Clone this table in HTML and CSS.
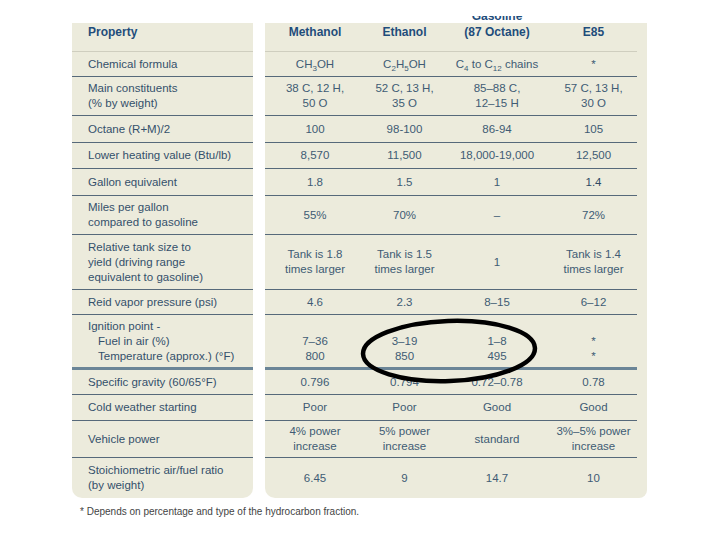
FILE: index.html
```html
<!DOCTYPE html>
<html>
<head>
<meta charset="utf-8">
<link rel="stylesheet" href="styles.css">
</head>
<body>
<div class="page">
  <div class="clip">
    <table class="fuel">
      <colgroup>
        <col class="c-prop"><col class="c-gap"><col class="c-m"><col class="c-e"><col class="c-g"><col class="c-e85"><col class="c-pad">
      </colgroup>
      <tr class="head">
        <th class="prop">Property</th><td class="gap"></td>
        <th>Methanol</th><th>Ethanol</th><th><span class="over">Gasoline</span>(87 Octane)</th><th>E85</th><td class="pad"></td>
      </tr>
      <tr class="h25">
        <td class="prop">Chemical formula</td><td class="gap"></td>
        <td>CH<sub>3</sub>OH</td><td>C<sub>2</sub>H<sub>5</sub>OH</td><td>C<sub>4</sub> to C<sub>12</sub> chains</td><td>*</td><td class="pad"></td>
      </tr>
      <tr class="h39">
        <td class="prop">Main constituents<br>(% by weight)</td><td class="gap"></td>
        <td>38 C, 12 H,<br>50 O</td><td>52 C, 13 H,<br>35 O</td><td>85–88 C,<br>12–15 H</td><td>57 C, 13 H,<br>30 O</td><td class="pad"></td>
      </tr>
      <tr class="h27">
        <td class="prop">Octane (R+M)/2</td><td class="gap"></td>
        <td>100</td><td>98-100</td><td>86-94</td><td>105</td><td class="pad"></td>
      </tr>
      <tr class="h26">
        <td class="prop">Lower heating value (Btu/lb)</td><td class="gap"></td>
        <td>8,570</td><td>11,500</td><td>18,000-19,000</td><td>12,500</td><td class="pad"></td>
      </tr>
      <tr class="h27">
        <td class="prop">Gallon equivalent</td><td class="gap"></td>
        <td>1.8</td><td>1.5</td><td>1</td><td class="dk">1.4</td><td class="pad"></td>
      </tr>
      <tr class="h39">
        <td class="prop">Miles per gallon<br>compared to gasoline</td><td class="gap"></td>
        <td>55%</td><td>70%</td><td>–</td><td>72%</td><td class="pad"></td>
      </tr>
      <tr class="h55">
        <td class="prop">Relative tank size to<br>yield (driving range<br>equivalent to gasoline)</td><td class="gap"></td>
        <td>Tank is 1.8<br>times larger</td><td>Tank is 1.5<br>times larger</td><td>1</td><td>Tank is 1.4<br>times larger</td><td class="pad"></td>
      </tr>
      <tr class="h25">
        <td class="prop">Reid vapor pressure (psi)</td><td class="gap"></td>
        <td>4.6</td><td>2.3</td><td>8–15</td><td>6–12</td><td class="pad"></td>
      </tr>
      <tr class="h55 ign">
        <td class="prop">Ignition point -<br><span class="ind">Fuel in air (%)</span><br><span class="ind">Temperature (approx.) (°F)</span></td><td class="gap"></td>
        <td class="low">7–36<br>800</td><td class="low">3–19<br>850</td><td class="low">1–8<br>495</td><td class="low">*<br>*</td><td class="pad"></td>
      </tr>
      <tr class="h25">
        <td class="prop">Specific gravity (60/65°F)</td><td class="gap"></td>
        <td>0.796</td><td>0.794</td><td>0.72–0.78</td><td>0.78</td><td class="pad"></td>
      </tr>
      <tr class="h26">
        <td class="prop">Cold weather starting</td><td class="gap"></td>
        <td>Poor</td><td>Poor</td><td>Good</td><td>Good</td><td class="pad"></td>
      </tr>
      <tr class="h37">
        <td class="prop">Vehicle power</td><td class="gap"></td>
        <td>4% power<br>increase</td><td>5% power<br>increase</td><td>standard</td><td>3%–5% power<br>increase</td><td class="pad"></td>
      </tr>
      <tr class="h40 last">
        <td class="prop">Stoichiometric air/fuel ratio<br>(by weight)</td><td class="gap"></td>
        <td class="first-r">6.45</td><td>9</td><td>14.7</td><td>10</td><td class="pad"></td>
      </tr>
    </table>
  </div>
  <p class="note">* Depends on percentage and type of the hydrocarbon fraction.</p>
  <svg class="ring" width="190" height="80" viewBox="0 0 190 80">
    <ellipse cx="95" cy="40" rx="86" ry="30" fill="none" stroke="#000" stroke-width="4.5" transform="rotate(-2 95 40)"/>
  </svg>
</div>
</body>
</html>
```
FILE: styles.css
```css
html, body {
  margin: 0;
  padding: 0;
  background: #ffffff;
}
.page {
  position: relative;
  box-sizing: border-box;
  width: 720px;
  height: 540px;
  padding-top: 16px;
  font-family: "Liberation Sans", Arial, sans-serif;
}
.clip {
  margin: 0 0 0 72px;
  width: 575px;
  overflow: hidden;
}
.fuel {
  margin-top: 7px;
  border-collapse: separate;
  border-spacing: 0;
  table-layout: fixed;
  width: 575px;
  font-size: 11.5px;
  line-height: 15px;
  color: #405b74;
}
.c-prop { width: 181px; }
.c-gap { width: 12px; }
.c-m { width: 100px; }
.c-e { width: 79px; }
.c-g { width: 106px; }
.c-e85 { width: 87px; }
.c-pad { width: 10px; }

.fuel td, .fuel th {
  background: #ecebdc;
  box-sizing: border-box;
  padding: 0;
  text-align: center;
  vertical-align: middle;
  border-bottom: 1.5px solid #56697a;
  white-space: nowrap;
}
.fuel td.gap {
  background: #ffffff;
  border-bottom: none;
}
.fuel td.pad {
  border-bottom: none;
}
.fuel .prop {
  text-align: left;
  padding-left: 16px;
  color: #34506b;
}
.fuel sub {
  font-size: 8px;
  line-height: 0;
  vertical-align: -3px;
}
.head th, .head td {
  height: 29px;
  vertical-align: top;
  padding-top: 2px;
  font-weight: bold;
  font-size: 12px;
  line-height: 14px;
  color: #1f4d7b;
  border-bottom: 1px solid #cfcebf;
}
.head th.prop { color: #1f4d7b; }
.head .over {
  display: block;
  margin-top: -16px;
  margin-bottom: 2px;
}
.h25 td { height: 25px; }
.h26 td { height: 26px; }
.h27 td { height: 27px; }
.h37 td { height: 37px; }
.h39 td { height: 39px; }
.h40 td { height: 40px; }
.h55 td { height: 55px; }
.ign td { border-bottom: 3px solid #6b8597; }
.ign td.low { padding-top: 15px; }
.ind { padding-left: 10px; }
.dk { color: #2f4a64; }
.last td { border-bottom: none; height: 40px; }
.last td.prop { border-bottom-left-radius: 10px; }
.last td:nth-child(1) { border-bottom-right-radius: 10px; }
.last td.first-r { border-bottom-left-radius: 10px; }
.last td.pad { border-bottom-right-radius: 8px; }
.note {
  margin: 8px 0 0 80px;
  font-size: 10px;
  line-height: 12px;
  color: #444;
}
.ring {
  position: absolute;
  left: 354px;
  top: 311px;
}
```
